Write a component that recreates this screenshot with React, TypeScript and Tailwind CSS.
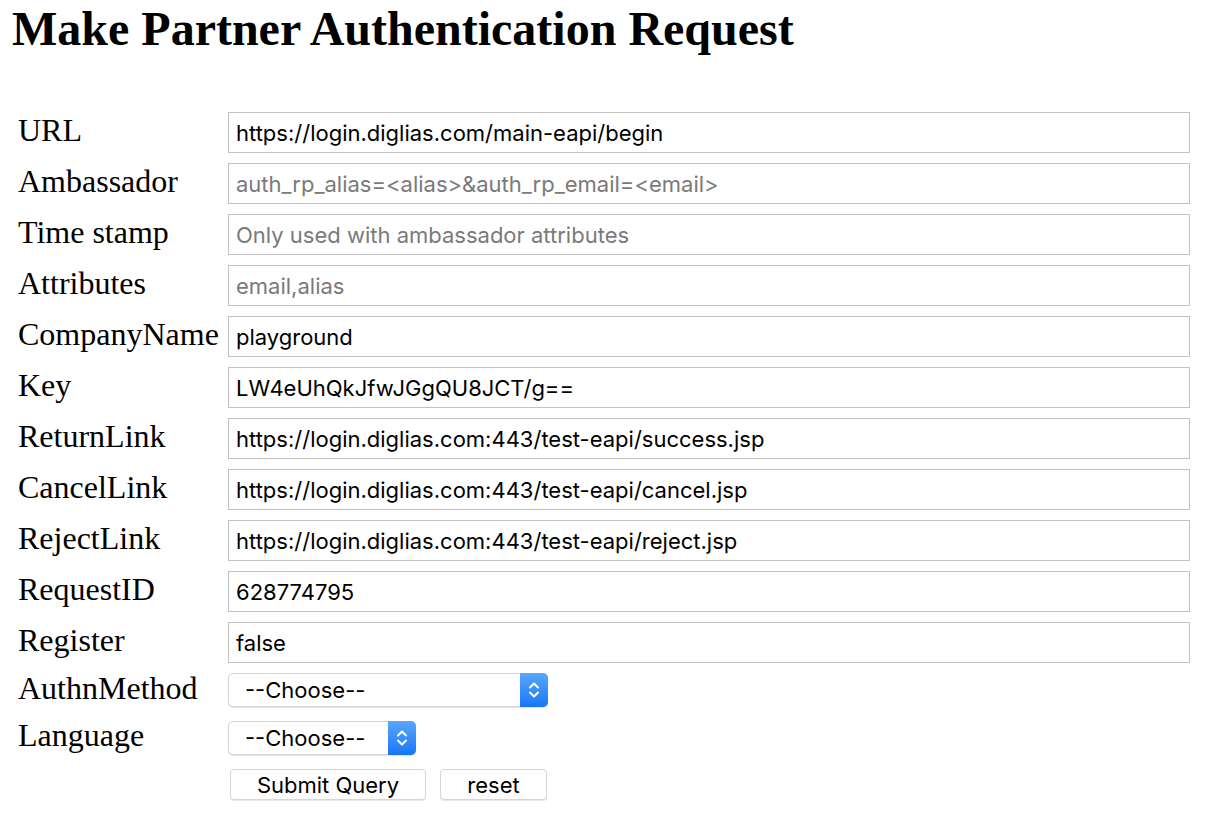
import React from "react";

const fields: { label: string; value?: string; placeholder?: string }[] = [
  { label: "URL", value: "https://login.diglias.com/main-eapi/begin" },
  { label: "Ambassador", placeholder: "auth_rp_alias=<alias>&auth_rp_email=<email>" },
  { label: "Time stamp", placeholder: "Only used with ambassador attributes" },
  { label: "Attributes", placeholder: "email,alias" },
  { label: "CompanyName", value: "playground" },
  { label: "Key", value: "LW4eUhQkJfwJGgQU8JCT/g==" },
  { label: "ReturnLink", value: "https://login.diglias.com:443/test-eapi/success.jsp" },
  { label: "CancelLink", value: "https://login.diglias.com:443/test-eapi/cancel.jsp" },
  { label: "RejectLink", value: "https://login.diglias.com:443/test-eapi/reject.jsp" },
  { label: "RequestID", value: "628774795" },
  { label: "Register", value: "false" },
];

function Label({ children }: { children: React.ReactNode }) {
  return (
    <div className="w-[210px] shrink-0 pb-[5px] font-['Liberation_Serif',serif] text-[32px] leading-none text-black">
      {children}
    </div>
  );
}

function Select({ width }: { width: string }) {
  return (
    <div
      className={`${width} flex h-[34px] items-stretch rounded-[5px] border border-[#d4d4d4] bg-white shadow-[0_1px_1px_rgba(0,0,0,0.12)]`}
    >
      <span className="flex-1 pl-[16px] pt-[2px] text-[22px] leading-[28px] text-black">--Choose--</span>
      <span className="-my-px -mr-px flex w-[28px] items-center justify-center rounded-r-[5px] bg-gradient-to-b from-[#58a6ff] to-[#1576f5]">
        <svg width="14" height="22" viewBox="0 0 14 22" fill="none" stroke="white" strokeWidth="2" strokeLinecap="round" strokeLinejoin="round">
          <path d="M3 8.5 L7 4.5 L11 8.5" />
          <path d="M3 13.5 L7 17.5 L11 13.5" />
        </svg>
      </span>
    </div>
  );
}

export default function App() {
  return (
    <div className="min-h-[820px] bg-white font-['Inter',sans-serif] text-black">
      <h1 className="pl-[12px] pt-[5px] font-['Liberation_Serif',serif] text-[48px] font-bold leading-none">
        Make Partner Authentication Request
      </h1>
      <form className="mt-[59px] flex flex-col pl-[18px]">
        <div className="flex flex-col gap-[10px]">
          {fields.map((f) => (
            <div key={f.label} className="flex h-[41px] items-center">
              <Label>{f.label}</Label>
              <input
                readOnly
                defaultValue={f.value}
                placeholder={f.placeholder}
                className="h-[41px] w-[962px] border border-[#c2c2c2] bg-white px-[7px] text-[22px] text-black placeholder:text-[#7a7a7a] outline-none"
              />
            </div>
          ))}
        </div>
        <div className="mt-[10px] flex h-[34px] items-center">
          <Label>AuthnMethod</Label>
          <Select width="w-[320px]" />
        </div>
        <div className="mt-[14px] flex h-[33px] items-center">
          <Label>Language</Label>
          <Select width="w-[188px]" />
        </div>
        <div className="mt-[15px] flex gap-[14px] pl-[212px]">
          <button
            type="button"
            className="h-[31px] w-[196px] rounded-[4px] border border-[#d6d6d6] bg-white text-[22px] leading-none shadow-[0_1px_1px_rgba(0,0,0,0.1)]"
          >
            Submit Query
          </button>
          <button
            type="button"
            className="h-[31px] w-[107px] rounded-[4px] border border-[#d6d6d6] bg-white text-[22px] leading-none shadow-[0_1px_1px_rgba(0,0,0,0.1)]"
          >
            reset
          </button>
        </div>
      </form>
    </div>
  );
}
